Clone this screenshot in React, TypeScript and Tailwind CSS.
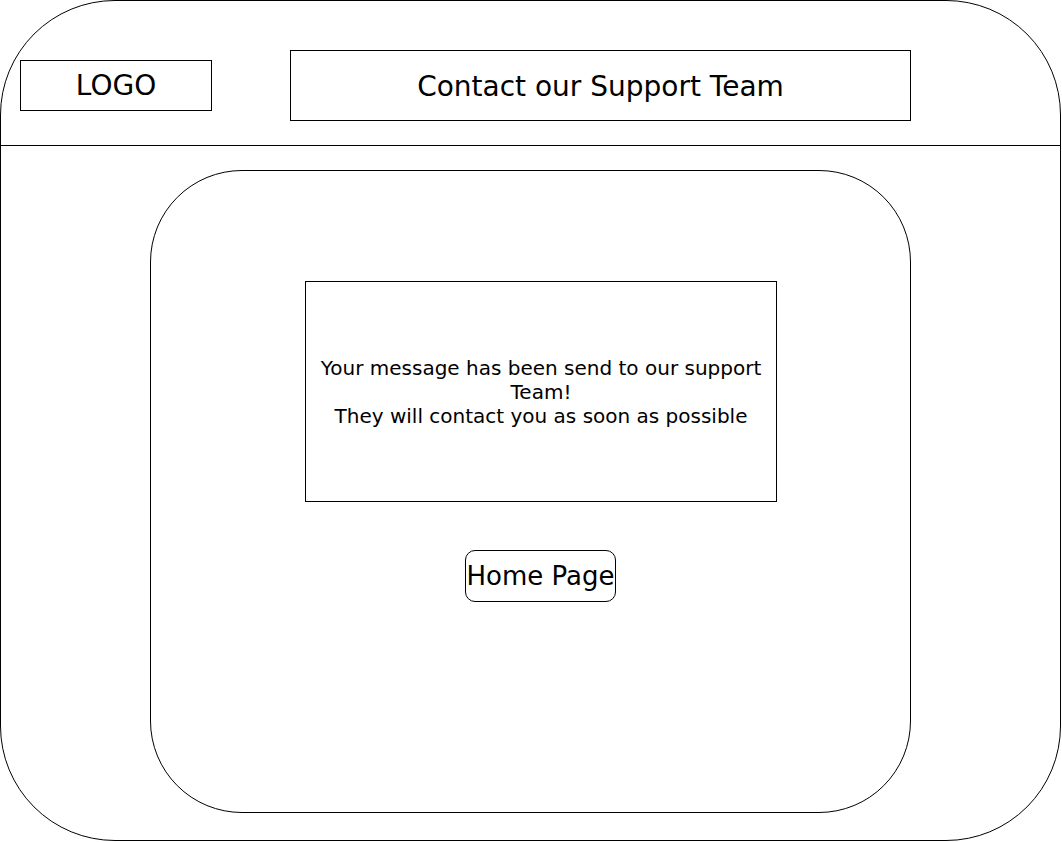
import React from "react";

export default function App() {
  const font = { fontFamily: '"DejaVu Sans", Verdana, sans-serif' };
  return (
    <div className="w-[1062px] h-[842px] bg-white text-black" style={font}>
      <div className="w-[1061px] h-[841px] border border-black rounded-[115px] flex flex-col overflow-hidden">
        <header className="h-[145px] shrink-0 border-b border-black flex items-start">
          <div className="ml-[19px] mt-[59px] w-[192px] h-[51px] border border-black flex items-center justify-center text-[28px] leading-none">
            LOGO
          </div>
          <div className="ml-[78px] mt-[49px] w-[621px] h-[71px] border border-black flex items-center justify-center text-[28px] leading-none pt-[2px]">
            Contact our Support Team
          </div>
        </header>
        <main className="flex-1">
          <div className="ml-[149px] mt-[24px] w-[761px] h-[643px] border border-black rounded-[92px] flex flex-col items-start">
            <div className="ml-[154px] mt-[110px] w-[472px] h-[221px] border border-black flex items-center justify-center text-center text-[20px] leading-[24px] px-[8px]">
              <p>
                Your message has been send to our support Team!
                <br />
                They will contact you as soon as possible
              </p>
            </div>
            <button className="ml-[314px] mt-[48px] w-[151px] h-[52px] border border-black rounded-[10px] flex items-center justify-center text-[26px] leading-none bg-white">
              Home Page
            </button>
          </div>
        </main>
      </div>
    </div>
  );
}
